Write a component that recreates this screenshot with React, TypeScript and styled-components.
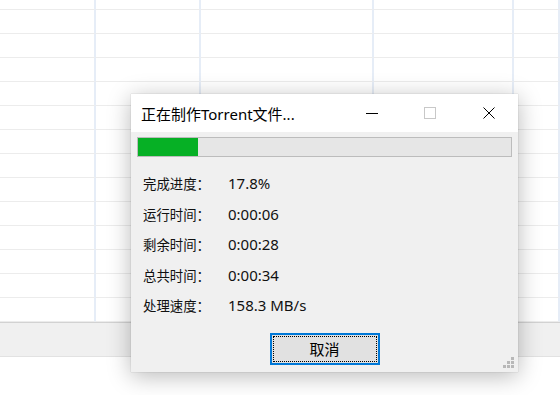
import React from "react";
import styled, { createGlobalStyle } from "styled-components";

const Global = createGlobalStyle`
  html, body { margin: 0; padding: 0; background: #ffffff; }
  body { width: 560px; height: 395px; overflow: hidden; font-family: "Noto Sans", "Noto Sans CJK SC", sans-serif; }
  #root { width: 560px; height: 395px; }
`;

const Screen = styled.div`
  position: relative;
  width: 560px;
  height: 395px;
  background: #ffffff;
  overflow: hidden;
`;

const Sheet = styled.div`
  display: grid;
  grid-template-columns: 96px 105px 173px 140px 1fr;
  grid-template-rows: 10px repeat(13, 24px);
`;

const Cell = styled.div`
  border-right: 2px solid #e6edf7;
  border-bottom: 1px solid #ececec;
`;

const StatusBand = styled.div`
  height: 33px;
  background: #f0f0f0;
  border-top: 1px solid #d2d2d2;
  border-bottom: 1px solid #e2e2e2;
`;

const Dialog = styled.div`
  position: absolute;
  left: 131px;
  top: 94px;
  width: 387px;
  height: 278px;
  display: flex;
  flex-direction: column;
  background: #f0f0f0;
  box-shadow: 0 0 1px rgba(0, 0, 0, 0.25), 0 4px 22px rgba(0, 0, 0, 0.28);
`;

const TitleBar = styled.div`
  height: 38px;
  flex: none;
  display: flex;
  align-items: center;
  background: #ffffff;
`;

const Title = styled.div`
  flex: 1;
  padding-left: 10px;
  font-family: "Noto Sans", "Noto Sans CJK SC", sans-serif;
  font-size: 15px;
  color: #000000;
  white-space: nowrap;
`;

const CaptionButton = styled.div`
  width: 58.6px;
  height: 38px;
  display: flex;
  align-items: center;
  justify-content: center;
`;

const Body = styled.div`
  flex: 1;
  display: flex;
  flex-direction: column;
  padding: 5px 6px 0 6px;
  position: relative;
`;

const Track = styled.div`
  height: 18px;
  border: 1px solid #bcbcbc;
  background: #e6e6e6;
  display: flex;
`;

const Fill = styled.div`
  height: 100%;
  background: #06b025;
`;

const Stats = styled.div`
  display: flex;
  flex-direction: column;
  padding: 11px 0 0 6px;
`;

const Row = styled.div`
  height: 30.5px;
  display: flex;
  align-items: center;
`;

const Label = styled.span`
  width: 85px;
  font-family: "Noto Sans CJK SC", sans-serif;
  font-size: 13.4px;
  color: #111111;
`;

const Value = styled.span`
  font-family: "Noto Sans", "Noto Sans CJK SC", sans-serif;
  font-size: 15px;
  color: #111111;
`;

const ButtonRow = styled.div`
  display: flex;
  justify-content: center;
  padding-top: 12px;
`;

const Button = styled.button`
  width: 110px;
  height: 32px;
  padding: 0;
  border: 2px solid #0078d7;
  background: #e1e1e1;
  display: flex;
  align-items: stretch;
  justify-content: stretch;
  font-family: "Noto Sans CJK SC", sans-serif;
  font-size: 15px;
  color: #000;
`;

const FocusRing = styled.span`
  flex: 1;
  margin: 1px;
  border: 1px dotted #000000;
  display: flex;
  align-items: center;
  justify-content: center;
`;

const Grip = styled.svg`
  position: absolute;
  right: 3px;
  bottom: 3px;
`;

const stats: [string, string][] = [
  ["完成进度：", "17.8%"],
  ["运行时间：", "0:00:06"],
  ["剩余时间：", "0:00:28"],
  ["总共时间：", "0:00:34"],
  ["处理速度：", "158.3 MB/s"],
];

export default function App() {
  const cells = Array.from({ length: 14 * 5 });
  return (
    <>
      <Global />
      <Screen>
        <Sheet>
          {cells.map((_, i) => (
            <Cell key={i} />
          ))}
        </Sheet>
        <StatusBand />
        <Dialog>
          <TitleBar>
            <Title>正在制作Torrent文件...</Title>
            <CaptionButton>
              <svg width="12" height="12" viewBox="0 0 12 12">
                <line x1="0" y1="6.5" x2="12" y2="6.5" stroke="#000" strokeWidth="1" />
              </svg>
            </CaptionButton>
            <CaptionButton>
              <svg width="12" height="12" viewBox="0 0 12 12">
                <rect x="0.5" y="0.5" width="11" height="11" fill="none" stroke="#c8c8c8" strokeWidth="1" />
              </svg>
            </CaptionButton>
            <CaptionButton>
              <svg width="12" height="12" viewBox="0 0 12 12">
                <path d="M0.5 0.5 L11.5 11.5 M11.5 0.5 L0.5 11.5" stroke="#000" strokeWidth="1" />
              </svg>
            </CaptionButton>
          </TitleBar>
          <Body>
            <Track>
              <Fill style={{ width: "60px" }} />
            </Track>
            <Stats>
              {stats.map(([l, v]) => (
                <Row key={l}>
                  <Label>{l}</Label>
                  <Value>{v}</Value>
                </Row>
              ))}
            </Stats>
            <ButtonRow>
              <Button>
                <FocusRing>取消</FocusRing>
              </Button>
            </ButtonRow>
            <Grip width="12" height="12" viewBox="0 0 12 12">
              <g fill="#b8b8b8">
                <rect x="8" y="0" width="3" height="3" />
                <rect x="4" y="4" width="3" height="3" />
                <rect x="8" y="4" width="3" height="3" />
                <rect x="0" y="8" width="3" height="3" />
                <rect x="4" y="8" width="3" height="3" />
                <rect x="8" y="8" width="3" height="3" />
              </g>
            </Grip>
          </Body>
        </Dialog>
      </Screen>
    </>
  );
}
